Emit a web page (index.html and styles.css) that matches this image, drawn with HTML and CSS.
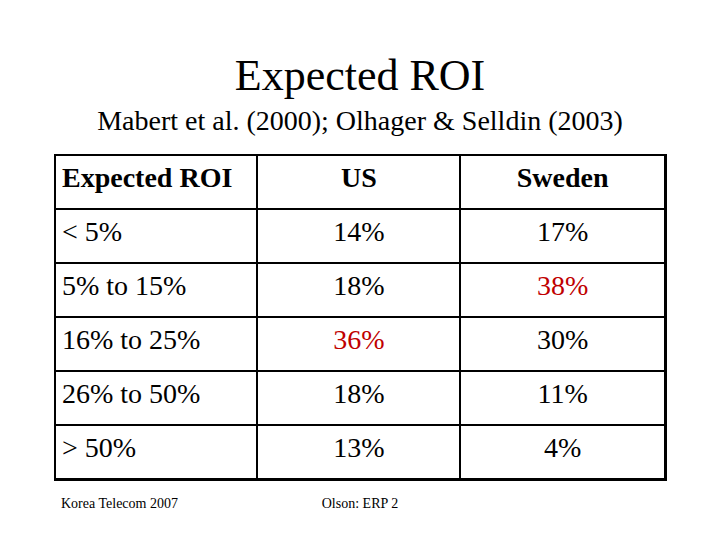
FILE: index.html
```html
<!DOCTYPE html>
<html>
<head>
<meta charset="utf-8">
<link rel="stylesheet" href="styles.css">
</head>
<body>
<div class="slide">
  <header class="head">
    <h1 class="title">Expected ROI</h1>
    <p class="subtitle">Mabert et al. (2000); Olhager &amp; Selldin (2003)</p>
  </header>
  <table class="roi">
    <colgroup><col class="c1"><col class="c2"><col class="c3"></colgroup>
    <tr class="hdr"><th class="left">Expected ROI</th><th>US</th><th>Sweden</th></tr>
    <tr><td class="left">&lt; 5%</td><td>14%</td><td>17%</td></tr>
    <tr><td class="left">5% to 15%</td><td>18%</td><td class="red">38%</td></tr>
    <tr><td class="left">16% to 25%</td><td class="red">36%</td><td>30%</td></tr>
    <tr><td class="left">26% to 50%</td><td>18%</td><td>11%</td></tr>
    <tr><td class="left">&gt; 50%</td><td>13%</td><td>4%</td></tr>
  </table>
  <footer class="foot">
    <span class="foot-left">Korea Telecom 2007</span>
    <span class="foot-mid">Olson: ERP 2</span>
  </footer>
</div>
</body>
</html>
```
FILE: styles.css
```css
html, body { margin: 0; padding: 0; background: #fff; }
.slide {
  width: 720px; height: 540px; position: relative;
  font-family: "Liberation Serif", "Times New Roman", serif; color: #000;
  display: flex; flex-direction: column;
}
.head { flex: none; text-align: center; padding-top: 52px; height: 154px; box-sizing: border-box; }
.title { margin: 0; font-weight: normal; font-size: 44px; line-height: 48px; }
.subtitle { margin: 0; font-size: 28px; line-height: 34px; margin-top: 4px; }
.roi {
  flex: none;
  margin-left: 54px; width: 613px; border-collapse: collapse;
  border-top: 2px solid #000; border-left: 2px solid #000;
  border-right: 3px solid #000; border-bottom: 3px solid #000;
  font-size: 28px;
}
.c1 { width: 203px; } .c2 { width: 204px; } .c3 { width: 206px; }
.roi th, .roi td {
  border: 2px solid #000; height: 54px; padding: 0 0 8px 0;
  text-align: center; vertical-align: middle; box-sizing: border-box;
}
.roi tr:first-child th { border-top: none; }
.roi th:first-child, .roi td:first-child { border-left: none; }
.roi th:last-child, .roi td:last-child { border-right: none; }
.roi tr:last-child td { border-bottom: none; }
.roi th { font-weight: bold; }
.roi .left { text-align: left; padding-left: 6px; }
.red { color: #c00000; }
.foot { flex: none; position: relative; height: 60px; font-size: 14px; }
.foot-left { position: absolute; left: 61px; top: 15px; }
.foot-mid { position: absolute; left: 0; right: 0; top: 15px; text-align: center; }
```
